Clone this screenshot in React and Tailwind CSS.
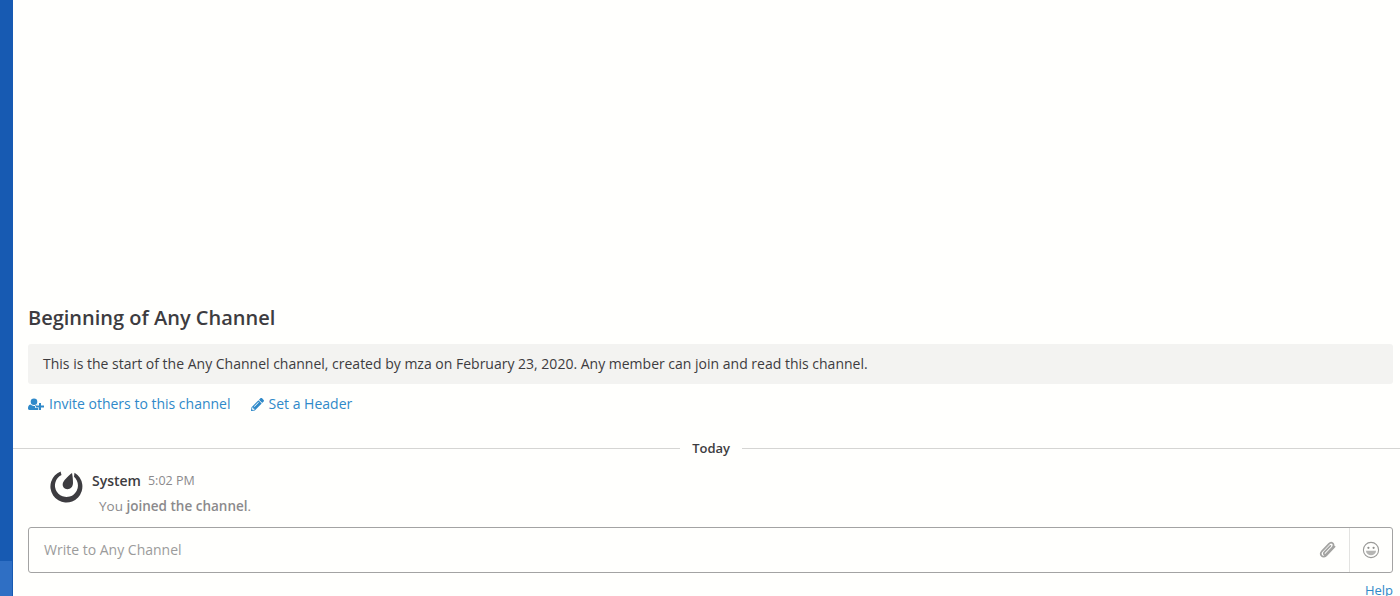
import { FaPencilAlt } from 'react-icons/fa';

function UserPlus() {
  return (
    <svg width="16" height="13" viewBox="0 0 16 13" fill="currentColor" className="mr-[5px]">
      <circle cx="6" cy="3.8" r="3.3" />
      <path d="M2.4 6.6 C3.4 7.5 4.6 8 6 8 C7.2 8 8.2 7.6 9.2 6.8 L10 7 H7.2 V10 H10.3 V12 H1.4 C0.5 12 0 11.5 0 10.6 C0 8.6 0.6 7 2.4 6.6 Z" />
      <path d="M11 5 H13 V7.5 H16 V9.5 H13 V12 H11 V9.5 H8 V7.5 H11 Z" />
    </svg>
  );
}

function MattermostLogo() {
  return (
    <svg width="33" height="33" viewBox="0 0 33 33" fill="#3d3c40">
      <path d="M10.6 1.6 A16 16 0 1 0 24.5 2.7 L24 6.8 A11.5 11.5 0 1 1 11.5 5.1 Z" />
      <path d="M22 3 C22.6 6 23 9.5 23 13 C23 16.8 20.4 19.2 17.4 19.2 C14.4 19.2 12.4 16.8 12.7 14 C13 10.8 17.6 6.6 22 3 Z" />
    </svg>
  );
}

function Paperclip() {
  return (
    <svg width="18" height="18" viewBox="0 0 18 18" fill="none" stroke="#a3a3a1" strokeWidth="1.7" strokeLinecap="round">
      <path d="M15.6 5.6 L7.6 14.2 C6 15.9 3.9 16.1 2.7 14.9 C1.4 13.6 1.6 11.6 3 10.1 L9.9 2.8 C11.1 1.5 12.7 1.3 13.8 2.3 C14.9 3.3 14.7 5 13.6 6.2 L7.2 13 C6.5 13.7 5.6 13.8 5.1 13.3 C4.6 12.8 4.7 11.9 5.4 11.2 L11.4 4.8" />
    </svg>
  );
}

function Smiley() {
  return (
    <svg width="18" height="18" viewBox="0 0 18 18" fill="none">
      <circle cx="9" cy="9" r="7.6" stroke="#9a9a98" strokeWidth="1.1" />
      <circle cx="6.4" cy="6.8" r="1.1" fill="#8f8f8d" />
      <circle cx="11.6" cy="6.8" r="1.1" fill="#8f8f8d" />
      <path d="M3.9 9.8 H14.1 C13.8 12.6 11.7 14.3 9 14.3 C6.3 14.3 4.2 12.6 3.9 9.8 Z" fill="#b5b5b3" />
    </svg>
  );
}

export default function App() {
  return (
    <div className="flex h-[596px] overflow-hidden bg-[#fffffd] font-['Open_Sans',sans-serif] text-[#3d3c40] antialiased">
      <div className="flex w-[13px] shrink-0 flex-col justify-end bg-[#175ab2]">
        <div className="h-[35px] w-[12px] bg-[#2f6fc4]" />
      </div>

      <div className="flex min-w-0 flex-1 flex-col justify-end">
        <div className="pl-[15px] pr-[7px]">
          <h1 className="text-[20px] leading-[27px] font-semibold">Beginning of Any Channel</h1>
          <p className="mt-[13px] h-[40px] rounded-[3px] bg-[#f3f3f1] px-[15px] text-[14px] leading-[40px]">
            This is the start of the Any Channel channel, created by mza on February 23, 2020. Any member can join and read this channel.
          </p>
          <div className="mt-[10px] flex h-[20px] items-center text-[14px] leading-[20px] text-[#2f89c9]">
            <UserPlus />
            <span>Invite others to this channel</span>
            <FaPencilAlt className="ml-[20px] mr-[5px] text-[13px]" />
            <span>Set a Header</span>
          </div>
        </div>

        <div className="mt-[24px] flex h-[20px] items-center">
          <div className="h-px flex-1 bg-[#d5d5d3]" />
          <span className="px-[12px] text-[13px] leading-[20px] font-semibold">Today</span>
          <div className="h-px w-[658px] bg-[#d5d5d3]" />
        </div>

        <div className="mt-[12px] flex h-[58px] pl-[37px]">
          <MattermostLogo />
          <div className="ml-[9px] min-w-0">
            <div className="flex h-[20px] items-center">
              <span className="text-[14px] font-semibold">System</span>
              <span className="ml-[7px] pt-[2px] text-[12.5px] text-[#8b8a8c]">5:02 PM</span>
            </div>
            <p className="mt-[6px] ml-[7px] text-[13.5px] leading-[20px] text-[#8b8a8c]">
              You <span className="font-semibold">joined the channel</span>.
            </p>
          </div>
        </div>

        <div className="ml-[15px] mr-[7px] mt-[-1px] flex h-[46px] rounded-[3px] border border-[#a3a3a3]">
          <div className="flex flex-1 items-center pb-[2px] pl-[15px] text-[14px] text-[#9b9b9b]">Write to Any Channel</div>
          <div className="flex w-[44px] items-center justify-center pl-[1px]">
            <Paperclip />
          </div>
          <div className="flex w-[43px] items-center justify-center border-l border-[#e3e3e1]">
            <Smiley />
          </div>
        </div>

        <div className="mr-[7px] mt-[7px] h-[16px] text-right text-[13px] leading-[20px] text-[#2f89c9]">Help</div>
      </div>
    </div>
  );
}
